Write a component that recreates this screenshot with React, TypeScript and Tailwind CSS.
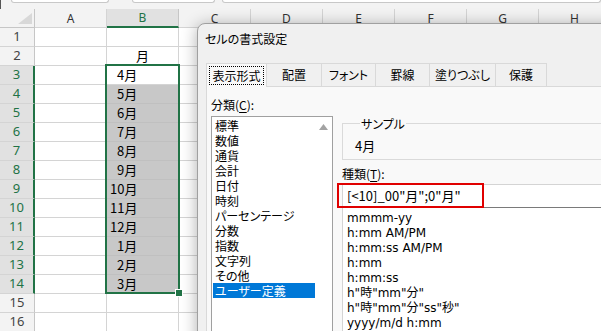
import React from "react";

const JP = "font-['Noto_Sans_CJK_JP',sans-serif] [font-feature-settings:'palt']";
const LAT = "font-['DejaVu_Sans','Noto_Sans_CJK_JP',sans-serif]";
const HDR = "font-['Noto_Sans',sans-serif]";

const cols = ["A", "B", "C", "D", "E", "F", "G", "H"];
const months = ["4", "5", "6", "7", "8", "9", "10", "11", "12", "1", "2", "3"];
const categories = ["標準", "数値", "通貨", "会計", "日付", "時刻", "パーセンテージ", "分数", "指数", "文字列", "その他", "ユーザー定義"];
const formats = ["mmmm-yy", "h:mm AM/PM", "h:mm:ss AM/PM", "h:mm", "h:mm:ss", 'h"時"mm"分"', 'h"時"mm"分"ss"秒"', "yyyy/m/d h:mm"];
const tabs = [
  { t: "表示形式", w: "w-[60px]" },
  { t: "配置", w: "w-[55px]" },
  { t: "フォント", w: "w-[54px]" },
  { t: "罫線", w: "w-[54px]" },
  { t: "塗りつぶし", w: "w-[66px]" },
  { t: "保護", w: "w-[52px]" },
];

function Sheet() {
  return (
    <div className="flex flex-col">
      <div className="h-[9px] bg-[#f3f3f3] flex items-start border-l border-[#555]">
        <div className="ml-[10px] w-[98px] h-[3px] bg-white border-x border-b border-[#c8c8c8] rounded-b-[3px]" />
        <div className="ml-[23px] w-[83px] h-[3px] bg-white border-x border-b border-[#c8c8c8] rounded-b-[3px]" />
        <div className="ml-[7px] flex-1 h-[3px] bg-white border-x border-b border-[#c8c8c8] rounded-b-[3px]" />
      </div>
      <div className="flex h-[19px]">
        <div className="w-[35px] shrink-0 bg-[#f3f3f3] border-r border-b border-[#c6c6c6] flex items-end justify-end pr-[2px] pb-[3px]">
          <svg width="14" height="11" viewBox="0 0 14 11">
            <path d="M14 0 L14 11 L0 11 Z" fill="#d8d8d8" />
          </svg>
        </div>
        {cols.map((c) => (
          <div
            key={c}
            className={`w-[72px] shrink-0 flex items-center justify-center text-[12px] leading-[17px] ${HDR} ${
              c === "B"
                ? "bg-[#e1e1e1] text-[#217346] border-r border-[#c6c6c6] border-b-2 border-b-[#217346]"
                : "bg-[#f3f3f3] text-[#333] border-r border-b border-[#d4d4d4]"
            }`}
          >
            {c}
          </div>
        ))}
      </div>
      {Array.from({ length: 16 }, (_, i) => {
        const r = i + 1;
        const sel = r >= 3 && r <= 14;
        const m = sel ? months[r - 3] : "";
        return (
          <div key={r} className="flex h-[19px]">
            <div
              className={`w-[35px] shrink-0 flex items-center justify-center text-[13px] border-b border-b-[#d4d4d4] ${HDR} ${
                sel
                  ? "bg-[#e1e1e1] text-[#217346] border-r-2 border-r-[#217346]"
                  : "bg-[#f3f3f3] text-[#444] border-r border-r-[#c6c6c6]"
              }`}
            >
              {r}
            </div>
            <div className="w-[72px] shrink-0 bg-white border-r border-b border-[#d4d4d4]" />
            <div
              className={`w-[72px] shrink-0 border-r border-b text-[13px] leading-[18px] text-black font-['Noto_Sans_CJK_JP',sans-serif] ${
                sel && r !== 3 ? "bg-[#c8c8c8] border-[#c0c0c0]" : "bg-white border-[#d4d4d4]"
              } ${r === 2 ? "text-center" : ""} ${sel ? (m.length < 2 ? "pl-[10px]" : "pl-[3px]") : ""}`}
            >
              {r === 2 ? "月" : sel ? `${m}月` : ""}
            </div>
            {cols.slice(2).map((c) => (
              <div key={c} className="w-[72px] shrink-0 bg-white border-r border-b border-[#d4d4d4]" />
            ))}
          </div>
        );
      })}
    </div>
  );
}

function Dialog() {
  return (
    <div className="absolute left-[197px] top-[23px] w-[430px] h-[340px] rounded-tl-[8px] bg-[#f0f0f0] border border-[#a0a0a0] shadow-[0_2px_16px_rgba(0,0,0,0.32)] flex flex-col">
      <div className={`h-[39px] pl-[7px] pt-[7px] text-[12px] leading-[16px] text-black ${JP}`}>セルの書式設定</div>
      <div className="flex items-start ml-[8px] h-[23px] relative z-10">
        {tabs.map((tb, i) => (
          <div
            key={tb.t}
            className={`${tb.w} shrink-0 border-t border-l border-[#d9d9d9] ${i === tabs.length - 1 ? "border-r" : ""} ${
              i === 0 ? "h-[24px] bg-[#f9f9f9] p-[2px]" : "h-[23px] bg-[#f0f0f0]"
            } flex items-center justify-center text-[12px] text-black ${JP}`}
          >
            {i === 0 ? (
              <div className="w-full h-[19px] flex items-center justify-center outline-1 outline-dotted outline-black -outline-offset-1">
                {tb.t}
              </div>
            ) : (
              tb.t
            )}
          </div>
        ))}
      </div>
      <div className="ml-[8px] flex-1 bg-[#f9f9f9] border-t border-l border-[#d9d9d9] flex pl-[4px]">
        <div className="w-[122px] shrink-0 flex flex-col pt-[10px]">
          <div className={`h-[15px] text-[12px] leading-[15px] text-black ${JP}`}>
            分類(<span className="underline underline-offset-2">C</span>):
          </div>
          <div className="mt-[4px] flex-1 flex bg-white border border-[#a0a0a0]">
            <div className="w-[102px] ml-[1px] mt-[1px] flex flex-col">
              {categories.map((c, i) => (
                <div
                  key={c}
                  className={`h-[15px] leading-[15px] pl-[2px] text-[12px] ${JP} ${
                    i === categories.length - 1 ? "bg-[#0078d7] text-white" : "text-black"
                  }`}
                >
                  {c}
                </div>
              ))}
            </div>
            <div className="w-[17px] flex justify-center pt-[7px]">
              <svg width="9" height="6" viewBox="0 0 9 6">
                <path d="M4.5 0 L9 6 L0 6 Z" fill="#a3a3a3" />
              </svg>
            </div>
          </div>
        </div>
        <div className="ml-[9px] w-[320px] shrink-0 flex flex-col">
          <fieldset className="mt-[29px] border border-[#dadada] pl-[12px] pt-[7px] pb-[5px]">
            <legend className={`ml-[5px] px-[1px] text-[12px] leading-[15px] text-black ${JP}`}>サンプル</legend>
            <div className={`text-[13px] leading-[16px] text-black ${JP}`}>4月</div>
          </fieldset>
          <div className={`mt-[6px] h-[15px] text-[12px] leading-[15px] text-black ${JP}`}>
            種類(<span className="underline underline-offset-2">T</span>):
          </div>
          <div className="relative mt-[3px] h-[24px] bg-white border border-[#d4d4d4] border-b-[#7a7a7a] pl-[4px] flex items-center">
            <span className="text-[13px] leading-[16px] text-black font-['Noto_Sans_CJK_JP',sans-serif]">[&lt;10]_00"月";0"月"</span>
            <div className="absolute -left-[6px] -top-[2px] w-[147px] h-[25px] shadow-[inset_0_0_0_2px_#e00000]" />
          </div>
          <div className="flex-1 bg-white border-l border-[#d4d4d4] pt-[3px] pl-[4px]">
            {formats.map((f) => (
              <div key={f} className={`h-[15px] leading-[15px] text-[12px] text-black whitespace-nowrap ${LAT}`}>
                {f}
              </div>
            ))}
          </div>
        </div>
      </div>
    </div>
  );
}

export default function App() {
  return (
    <div className="relative w-[601px] h-[331px] overflow-hidden bg-white">
      <Sheet />
      <div className="absolute left-[105px] top-[64px] w-[75px] h-[230px] border-2 border-[#217346] pointer-events-none" />
      <div className="absolute left-[176px] top-[290px] w-[6px] h-[6px] bg-[#217346] outline-1 outline-white" />
      <Dialog />
    </div>
  );
}
